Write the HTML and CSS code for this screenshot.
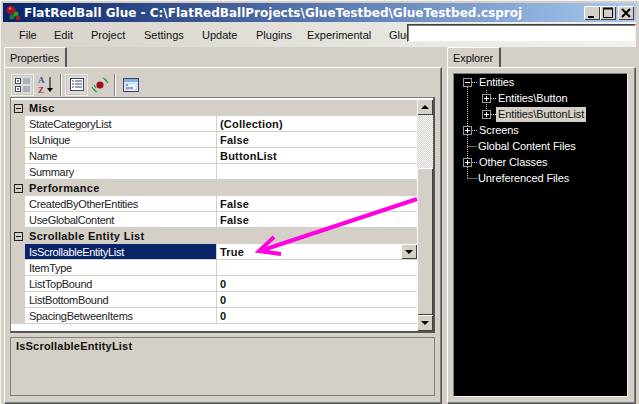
FILE: index.html
```html
<!DOCTYPE html>
<html lang="en">
<head>
<meta charset="utf-8">
<title>FlatRedBall Glue</title>
<link rel="stylesheet" href="styles.css">
</head>
<body>
<div class="window">
  <header class="titlebar">
    <svg class="appicon" width="16" height="16" viewBox="0 0 16 16"><circle cx="6" cy="5" r="4.5" fill="#a01525"/><circle cx="5" cy="3.6" r="1.4" fill="#e06070"/><circle cx="11" cy="9" r="2.5" fill="#2f9a2f"/><circle cx="7" cy="12" r="2.5" fill="#1f7f2a"/><circle cx="13" cy="13" r="2.2" fill="#b01a20"/></svg>
    <span class="title">FlatRedBall Glue - C:\FlatRedBallProjects\GlueTestbed\GlueTestbed.csproj</span>
    <div class="wbtns">
      <span class="wbtn"><svg width="16" height="14" viewBox="0 0 16 14"><rect x="4" y="10" width="6" height="2" fill="#000"/></svg></span>
      <span class="wbtn"><svg width="16" height="14" viewBox="0 0 16 14"><path d="M3.5 2.5h9v9h-9z" fill="none" stroke="#000"/><path d="M3 2.5h10" stroke="#000" stroke-width="2"/></svg></span>
      <span class="wbtn close"><svg width="16" height="14" viewBox="0 0 16 14"><path d="M4 3l8 8M12 3l-8 8" stroke="#000" stroke-width="2"/></svg></span>
    </div>
  </header>
  <nav class="menubar">
    <span class="mi m-file">File</span><span class="mi m-edit">Edit</span><span class="mi m-proj">Project</span><span class="mi m-set">Settings</span><span class="mi m-upd">Update</span><span class="mi m-plug">Plugins</span><span class="mi m-exp">Experimental</span><span class="mi m-glue">Glue</span>
    <div class="searchbox"></div>
  </nav>
  <main class="panes">
    <section class="pane left">
      <div class="tab">Properties</div>
      <div class="panel lpanel">
        <div class="toolbar">
          <span class="tool on"><svg width="18" height="18" viewBox="0 0 18 18"><g fill="#fff" stroke="#39456b"><rect x="1.5" y="2.5" width="5" height="5"/><rect x="1.5" y="10.5" width="5" height="5"/></g><path d="M3 5h2M3 13h2" stroke="#000"/><path d="M9 3h7M9 5h7M9 7h7M9 11h7M9 13h7M9 15h7" stroke="#7d8aa8"/></svg></span>
          <span class="tool"><svg width="18" height="20" viewBox="0 0 18 20"><text x="1" y="8" class="az a">A</text><text x="1" y="18" class="az z">Z</text><path d="M13 2v14" stroke="#000"/><path d="M10 13h6l-3 4z" fill="#000"/></svg></span>
          <span class="sep"></span>
          <span class="tool on"><svg width="14" height="14" viewBox="0 0 14 14"><rect x=".5" y=".5" width="13" height="12" fill="#fff" stroke="#39456b"/><path d="M2 3h2M2 6h2M2 9h2" stroke="#39456b"/><path d="M5 3h7M5 6h7M5 9h7" stroke="#39456b"/></svg></span>
          <span class="tool"><svg width="20" height="18" viewBox="0 0 20 18"><circle cx="10" cy="9" r="3.6" fill="#a01020"/><path d="M4 13l2 3M2 11c1 2 2 4 5 5M16 5l-2-3M18 7c-1-2-2-4-5-5M4 9l2 3" fill="none" stroke="#2a9a3a" stroke-width="1.2"/></svg></span>
          <span class="sep"></span>
          <span class="tool"><svg width="16" height="16" viewBox="0 0 16 16"><rect x=".5" y="1.5" width="15" height="13" fill="#fff" stroke="#39456b"/><rect x="1" y="2" width="14" height="3" fill="#7fb0e8"/><rect x="2" y="6" width="12" height="7" fill="#e8eefb" stroke="#9fb4d8" stroke-width=".6"/><path d="M3 8h2M3 11h7" stroke="#2f55a8"/></svg></span>
        </div>
        <div class="grid">
          <div class="rows">
            <div class="cat"><span class="exp"></span>Misc</div>
            <div class="row"><span class="k">StateCategoryList</span><span class="v">(Collection)</span></div>
            <div class="row"><span class="k">IsUnique</span><span class="v">False</span></div>
            <div class="row"><span class="k">Name</span><span class="v">ButtonList</span></div>
            <div class="row"><span class="k">Summary</span><span class="v"></span></div>
            <div class="cat"><span class="exp"></span>Performance</div>
            <div class="row"><span class="k">CreatedByOtherEntities</span><span class="v">False</span></div>
            <div class="row"><span class="k">UseGlobalContent</span><span class="v">False</span></div>
            <div class="cat"><span class="exp"></span>Scrollable Entity List</div>
            <div class="row sel"><span class="k">IsScrollableEntityList</span><span class="v">True<span class="drop"><i class="tri"></i></span></span></div>
            <div class="row"><span class="k">ItemType</span><span class="v"></span></div>
            <div class="row"><span class="k">ListTopBound</span><span class="v">0</span></div>
            <div class="row"><span class="k">ListBottomBound</span><span class="v">0</span></div>
            <div class="row"><span class="k">SpacingBetweenItems</span><span class="v">0</span></div>
          </div>
          <div class="scroll">
            <span class="sbtn"><i class="tri up"></i></span>
            <span class="track"></span>
            <span class="thumb"></span>
            <span class="sbtn"><i class="tri"></i></span>
          </div>
        </div>
        <div class="help">IsScrollableEntityList</div>
      </div>
    </section>
    <section class="pane right">
      <div class="tab">Explorer</div>
      <div class="panel rpanel">
        <div class="tree">
          <svg class="lines" width="175" height="120" viewBox="0 0 175 120"><path d="M13.5 13V104.5M18 8.5H24M32.5 16V40.5M37 24.5H43M37 40.5H43M18 56.5H24M13.5 72.5H23M18 88.5H24M13.5 104.5H24" fill="none" stroke="#c8c8c8" stroke-dasharray="1 1"/></svg>
          <div class="node"><span class="ex minus"></span><span class="lb">Entities</span></div>
          <div class="node sub"><span class="ex plus"></span><span class="lb">Entities\Button</span></div>
          <div class="node sub"><span class="ex plus"></span><span class="lb picked">Entities\ButtonList</span></div>
          <div class="node"><span class="ex plus"></span><span class="lb">Screens</span></div>
          <div class="node"><span class="ex none"></span><span class="lb">Global Content Files</span></div>
          <div class="node"><span class="ex plus"></span><span class="lb">Other Classes</span></div>
          <div class="node"><span class="ex none"></span><span class="lb">Unreferenced Files</span></div>
        </div>
      </div>
    </section>
    <svg class="arrow" width="639" height="404" viewBox="0 0 639 404"><path d="M416 199L259 251M273 237L258 251L280 254" fill="none" stroke="#ff00e0" stroke-width="4"/></svg>
  </main>
</div>
</body>
</html>
```
FILE: styles.css
```css
* { box-sizing: border-box; }
html, body { margin: 0; padding: 0; }
body { width: 639px; height: 404px; overflow: hidden; background: #d4d0c8; font: 11px "Liberation Sans", Arial, sans-serif; color: #000; }
.window { width: 639px; height: 404px; padding: 2px 3px 0 2px; border-top: 1px solid #f4f2ee; border-left: 1px solid #f4f2ee; display: flex; flex-direction: column; }
.titlebar { height: 19px; flex: none; display: flex; align-items: center; padding: 0 2px; background: linear-gradient(90deg, #0a246a, #a6caf0); color: #fff; }
.appicon { flex: none; margin-right: 3px; }
.title { font: bold 12px "DejaVu Sans", sans-serif; white-space: nowrap; flex: 1; }
.wbtns { display: flex; }
.wbtn { width: 16px; height: 14px; background: #d4d0c8; box-shadow: inset 1px 1px #fff, inset -1px -1px #404040; display: flex; }
.wbtn.close { margin-left: 2px; }
.menubar { height: 25px; flex: none; display: flex; align-items: center; margin: 0 0 0 -2px; background: linear-gradient(90deg, #d6d2ca, #f3f2ee); padding-left: 18px; }
.mi { white-space: nowrap; color: #111; }
.m-file { width: 35px; } .m-edit { width: 37px; } .m-proj { width: 53px; } .m-set { width: 58px; } .m-upd { width: 54px; } .m-plug { width: 51px; } .m-exp { width: 82px; } .m-glue { width: 18px; overflow: hidden; }
.searchbox { width: 229px; height: 18px; background: #fff; border: 1px solid; border-color: #404040 #f0eeea #f0eeea #404040; box-shadow: inset 1px 1px #808080; margin-top: -3px; }
.panes { flex: 1; display: flex; gap: 5px; position: relative; margin-left: 1px; min-height: 0; }
.pane { display: flex; flex-direction: column; min-width: 0; }
.left { width: 438px; }
.right { width: 189px; }
.tab { align-self: flex-start; height: 20px; padding: 4px 6px 0 5px; background: #d4d0c8; border-top: 1px solid #fff; border-left: 1px solid #fff; border-right: 2px solid #555; border-radius: 2px 2px 0 0; color: #111; letter-spacing: -.1px; }
.panel { flex: 1; border: 1px solid; border-color: #fff #555 #555 #fff; box-shadow: inset -1px -1px #808080; }
.lpanel { padding: 5px 6px 4px 5px; display: flex; flex-direction: column; }
.toolbar { height: 24px; display: flex; align-items: center; padding-left: 1px; flex: none; }
.tool { width: 23px; height: 22px; display: flex; align-items: center; justify-content: center; }
.tool.on { box-shadow: inset 0 0 0 1px #f2f0ea, inset 0 0 0 2px #c8c4bc; background: #dedbd4; }
.sep { width: 2px; height: 22px; margin: 0 3px; border-left: 1px solid #808080; border-right: 1px solid #fff; }
.az { font: bold 9px "Liberation Serif", serif; }
.a { fill: #2f55a8; } .z { fill: #9c3340; }
.grid { height: 236px; display: flex; flex: none; background: #fff; border: 1px solid #808080; border-right: 2px solid #555; border-bottom: 2px solid #555; padding-top: 2px; }
.rows { flex: 1; min-width: 0; }
.cat { height: 16px; display: flex; align-items: center; background: #d4d0c8; font-weight: bold; letter-spacing: .3px; padding: 0 0 1px 3px; color: #111; }
.exp { width: 9px; height: 9px; border: 1px solid #222; margin: 1px 6px 0 0; flex: none; position: relative; }
.exp::before { content: ""; position: absolute; left: 1px; top: 3px; width: 5px; height: 1px; background: #111; }
.row { height: 16px; display: flex; margin-left: 14px; background: #fff; box-shadow: -14px 0 #d4d0c8; border-bottom: 1px solid #d4d0c8; }
.k { width: 192px; padding: 2px 0 0 4px; line-height: 13px; border-right: 1px solid #d4d0c8; color: #222; white-space: nowrap; letter-spacing: -.3px; }
.v { flex: 1; padding: 2px 0 0 3px; line-height: 13px; font-weight: bold; letter-spacing: .2px; color: #111; position: relative; white-space: nowrap; }
.sel .k { background: #0a246a; color: #fff; }
.drop { position: absolute; right: 0; top: 0; width: 16px; height: 15px; background: #d4d0c8; box-shadow: inset 1px 1px #fff, inset -1px -1px #404040; display: flex; align-items: center; justify-content: center; }
.tri { width: 0; height: 0; display: block; border: 4px solid transparent; border-top-color: #000; border-bottom-width: 0; }
.tri.up { border-top-width: 0; border-bottom: 4px solid #000; }
.scroll { width: 16px; flex: none; display: flex; flex-direction: column; margin-top: -1px; }
.sbtn { height: 16px; flex: none; background: #d4d0c8; box-shadow: inset 1px 1px #fff, inset -1px -1px #404040; display: flex; align-items: center; justify-content: center; }
.track { height: 53px; flex: none; background: repeating-conic-gradient(#d4d0c8 0 25%, #fff 0 50%) 0 0 / 2px 2px; }
.thumb { flex: 1; background: #d4d0c8; box-shadow: inset 1px 1px #fff, inset -1px -1px #404040; }
.help { margin-top: 4px; height: 59px; border: 1px solid #808080; font-weight: bold; padding: 2px 5px; color: #111; flex: none; letter-spacing: .2px; }
.rpanel { padding: 5px 7px 6px 5px; }
.tree { height: 100%; background: #000; border: 1px solid; border-color: #808080 #f4f2ee #f4f2ee #808080; position: relative; color: #fff; }
.lines { position: absolute; left: 0; top: 0; }
.node { height: 16px; display: flex; align-items: center; padding-left: 9px; position: relative; }
.node.sub { padding-left: 28px; }
.ex { width: 9px; height: 9px; border: 1px solid #999; background: #000; flex: none; margin-right: 5px; position: relative; }
.ex::before { content: ""; position: absolute; left: 1px; top: 3px; width: 5px; height: 1px; background: #fff; }
.ex.plus::after { content: ""; position: absolute; left: 3px; top: 1px; width: 1px; height: 5px; background: #fff; }
.ex.none { visibility: hidden; margin-right: 4px; }
.lb { padding: 0 2px; height: 15px; line-height: 15px; white-space: nowrap; letter-spacing: -.1px; }
.lb.picked { background: #d4d0c8; color: #111; }
.arrow { position: absolute; left: -3px; top: -47px; pointer-events: none; }
```
